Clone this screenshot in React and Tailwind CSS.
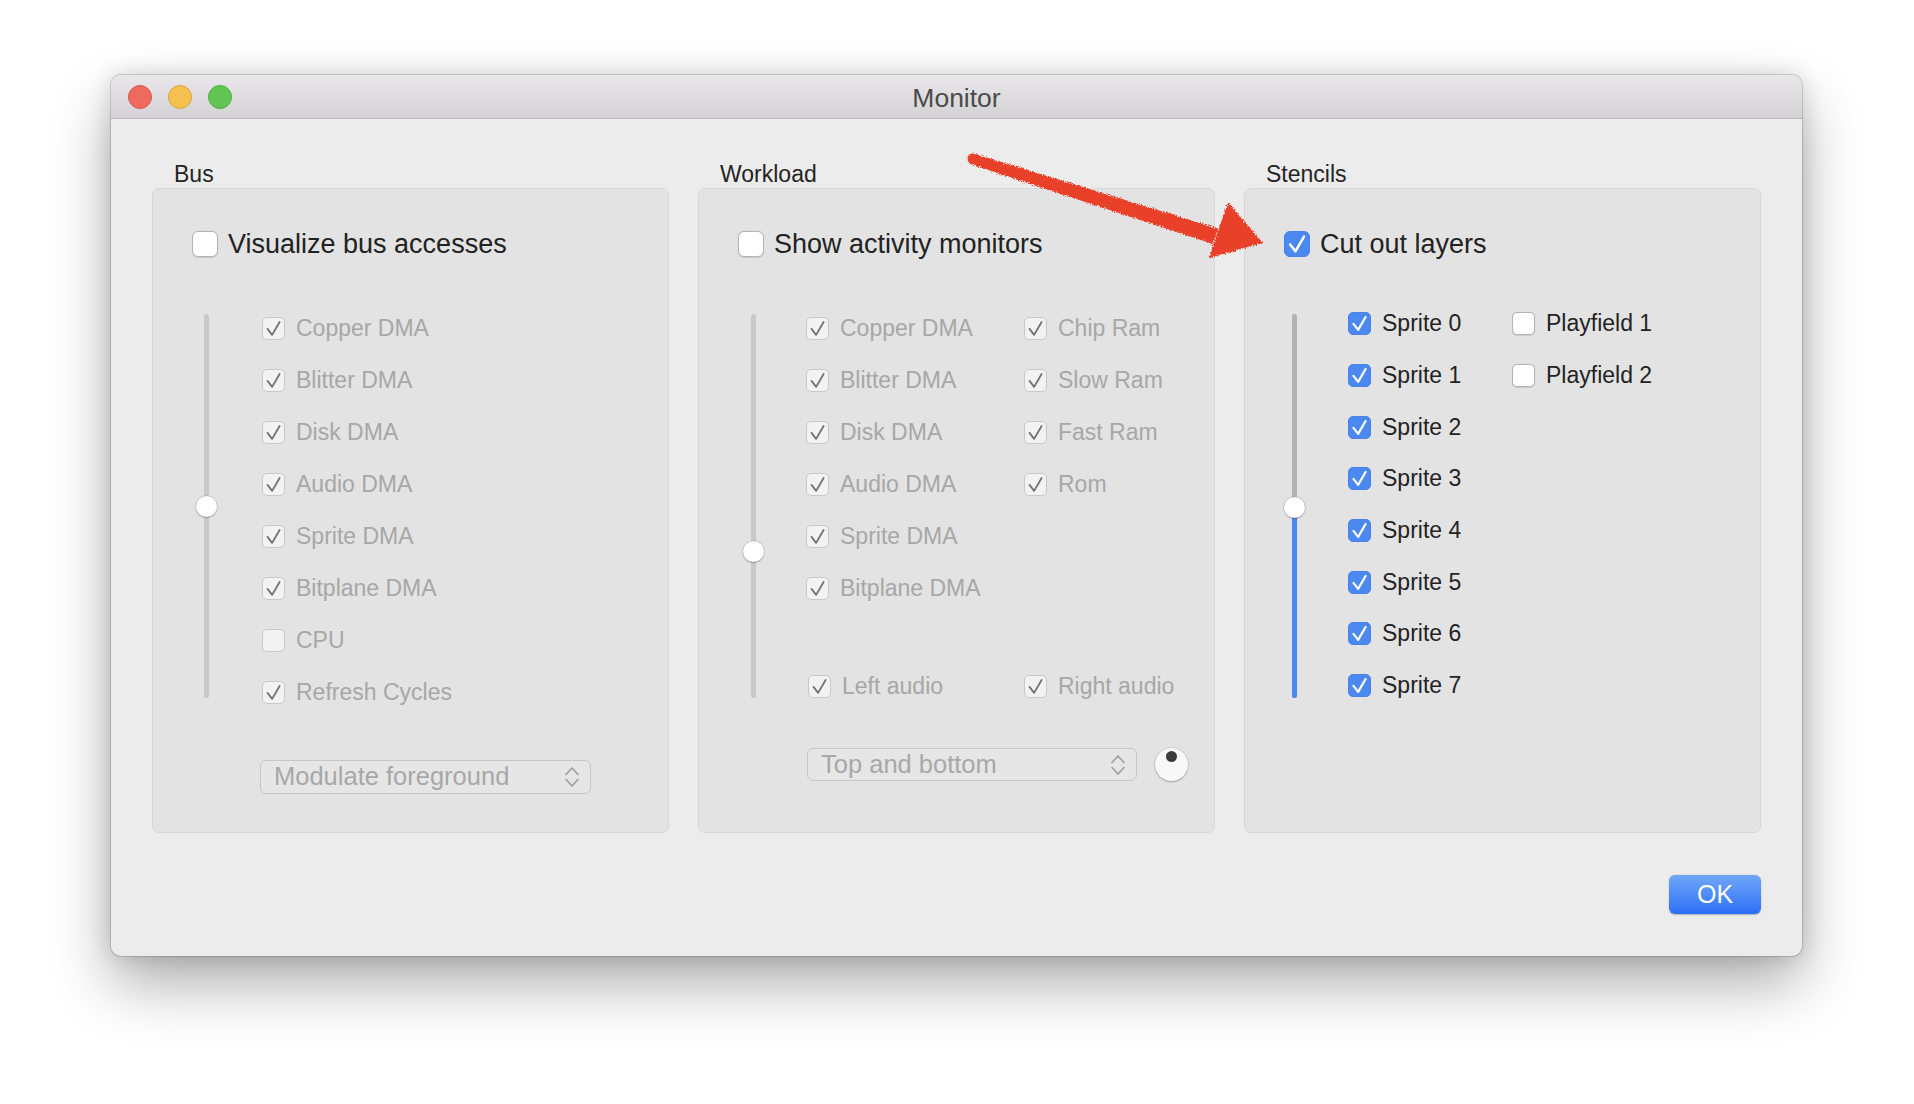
import React from "react";

// Small check glyph drawn inside a 23x23 box
function Tick({ stroke, width }) {
  return (
    <svg viewBox="0 0 23 23" className="w-full h-full">
      <path
        d="M4.9 11.9 L10 18.5 L18.2 4.4"
        fill="none"
        stroke={stroke}
        strokeWidth={width}
        strokeLinecap="round"
        strokeLinejoin="round"
      />
    </svg>
  );
}

const BOX_STYLE = {
  dim: "bg-[#f2f2f2] border border-[#c8c8c8]",
  off: "bg-white border border-[#b3b3b3] shadow-[0_0.5px_1px_rgba(0,0,0,0.12)]",
  on: "bg-[#4b89f0] border border-[#4682ea]",
};

function Box({ kind, checked, big }) {
  const size = big ? "w-[26px] h-[26px] rounded-[6px]" : "w-[23px] h-[23px] rounded-[5px]";
  return (
    <span className={`shrink-0 flex ${size} ${BOX_STYLE[kind]}`}>
      {checked && <Tick stroke={kind === "on" ? "#ffffff" : "#6f6f6f"} width={kind === "on" ? 2.4 : 1.9} />}
    </span>
  );
}

function Item({ label, kind = "dim", checked = true, extra = "" }) {
  const color = kind === "dim" ? "text-[#a7a7a7]" : "text-[#232323]";
  return (
    <div className={`flex items-center gap-[11px] ${extra}`}>
      <Box kind={kind} checked={checked} />
      <span className={`text-[23px] leading-none ${color}`}>{label}</span>
    </div>
  );
}

function MainToggle({ label, kind, checked }) {
  return (
    <div className="flex items-center gap-[10px] h-[26px]">
      <Box kind={kind} checked={checked} big />
      <span className="text-[27px] leading-none text-[#222222]">{label}</span>
    </div>
  );
}

function Slider({ pad, thumb, fill }) {
  return (
    <div className={`shrink-0 ${pad}`}>
      <div className={`relative w-[5px] h-[384px] rounded-full ${fill ? "bg-[#b2b2b2]" : "bg-[#c9c9c9]"}`}>
        {fill && <div className={`absolute left-0 right-0 bottom-0 rounded-b-full bg-[#4a87ee] ${fill}`} />}
        <div
          className={`absolute left-[-8px] w-[21px] h-[21px] rounded-full bg-white shadow-[0_0_0_0.5px_rgba(0,0,0,0.16),0_1px_2px_rgba(0,0,0,0.22)] ${thumb}`}
        />
      </div>
    </div>
  );
}

function Popup({ label, size }) {
  return (
    <div
      className={`flex items-center justify-between pl-[13px] pr-[10px] rounded-[6px] border border-[#c7c7c7] bg-[#e6e6e6] ${size}`}
    >
      <span className="text-[25.5px] leading-none text-[#a8a8a8]">{label}</span>
      <svg viewBox="0 0 16 24" className="w-[16px] h-[24px]">
        <path d="M2 9.5 L8 3 L14 9.5 M2 14.5 L8 21 L14 14.5" fill="none" stroke="#a0a0a0" strokeWidth="1.7" strokeLinecap="round" strokeLinejoin="round" />
      </svg>
    </div>
  );
}

function Section({ title, children }) {
  return (
    <div className="w-[517px] flex flex-col">
      <div className="h-[28px] leading-[30px] pl-[22px] mb-[1px] text-[23px] text-[#242424]">{title}</div>
      <div className="h-[645px] rounded-[7px] bg-[#e3e3e3] border border-[#d7d7d7] pt-[42px] pl-[39px] flex flex-col">
        {children}
      </div>
    </div>
  );
}

const busRows = [
  ["Copper DMA", true],
  ["Blitter DMA", true],
  ["Disk DMA", true],
  ["Audio DMA", true],
  ["Sprite DMA", true],
  ["Bitplane DMA", true],
  ["CPU", false],
  ["Refresh Cycles", true],
];

const workLeft = ["Copper DMA", "Blitter DMA", "Disk DMA", "Audio DMA", "Sprite DMA", "Bitplane DMA"];
const workRight = ["Chip Ram", "Slow Ram", "Fast Ram", "Rom"];
const sprites = ["Sprite 0", "Sprite 1", "Sprite 2", "Sprite 3", "Sprite 4", "Sprite 5", "Sprite 6", "Sprite 7"];

function TrafficLights() {
  return (
    <div className="flex items-center gap-[16px] pl-[17px] pt-[1px]">
      <span className="w-[24px] h-[24px] rounded-full bg-[#ee6a5f] border border-[#d5574c]" />
      <span className="w-[24px] h-[24px] rounded-full bg-[#f5c04f] border border-[#d9a441]" />
      <span className="w-[24px] h-[24px] rounded-full bg-[#61c554] border border-[#4fa941]" />
    </div>
  );
}

function RedArrow() {
  return (
    <svg viewBox="0 0 1914 1104" className="absolute inset-0 w-[1914px] h-[1104px] pointer-events-none">
      <defs>
        <filter id="crayon" x="-10%" y="-10%" width="120%" height="120%">
          <feTurbulence type="fractalNoise" baseFrequency="0.9" numOctaves="2" seed="3" result="n" />
          <feDisplacementMap in="SourceGraphic" in2="n" scale="5" xChannelSelector="R" yChannelSelector="G" />
        </filter>
      </defs>
      <g fill="#e9402a" filter="url(#crayon)">
        <circle cx="973" cy="159" r="5.5" />
        <polygon points="974.5,153.8 1218,228.5 1213,244 971.5,164.5" />
        <polygon points="1228,202 1209,258 1263,243" />
        <polygon points="1226,209 1214,250 1250,240" />
      </g>
    </svg>
  );
}

export default function App() {
  return (
    <div className="relative w-[1914px] h-[1104px] overflow-hidden bg-white pt-[75px] pl-[111px] font-['Liberation_Sans',Arial,sans-serif]">
      <div className="w-[1691px] h-[881px] rounded-[10px] overflow-hidden bg-[#ececec] flex flex-col shadow-[0_28px_60px_rgba(0,0,0,0.32),0_0_22px_rgba(0,0,0,0.14),0_0_0_1px_rgba(0,0,0,0.14)]">
        {/* title bar */}
        <div className="h-[44px] shrink-0 grid grid-cols-[1fr_auto_1fr] items-center bg-gradient-to-b from-[#e9e7e9] to-[#d4d2d4] border-b border-[#b8b8b8]">
          <TrafficLights />
          <span className="text-[26.5px] leading-none text-[#4b4b4b] pt-[4px]">Monitor</span>
          <span />
        </div>

        {/* content */}
        <div className="flex-1 flex flex-col px-[41px] pt-[40px]">
          <div className="flex gap-[29px]">
            {/* Bus */}
            <Section title="Bus">
              <MainToggle label="Visualize bus accesses" kind="off" checked={false} />
              <div className="flex mt-[45px]">
                <Slider pad="pl-[12px] pt-[12px]" thumb="top-[182px]" />
                <div className="ml-[53px] flex flex-col">
                  {busRows.map(([label, on]) => (
                    <div key={label} className="h-[52px] flex items-center">
                      <Item label={label} checked={on} />
                    </div>
                  ))}
                </div>
              </div>
              <div className="mt-[42px] ml-[68px]">
                <Popup label="Modulate foreground" size="w-[331px] h-[34px]" />
              </div>
            </Section>

            {/* Workload */}
            <Section title="Workload">
              <MainToggle label="Show activity monitors" kind="off" checked={false} />
              <div className="flex mt-[45px]">
                <Slider pad="pl-[13px] pt-[12px]" thumb="top-[227px]" />
                <div className="ml-[50px] flex flex-col">
                  <div className="flex">
                    <div className="w-[218px] flex flex-col">
                      {workLeft.map((label) => (
                        <div key={label} className="h-[52px] flex items-center">
                          <Item label={label} />
                        </div>
                      ))}
                    </div>
                    <div className="flex flex-col">
                      {workRight.map((label) => (
                        <div key={label} className="h-[52px] flex items-center">
                          <Item label={label} />
                        </div>
                      ))}
                    </div>
                  </div>
                  <div className="flex h-[52px] mt-[46px] items-center">
                    <div className="w-[218px]">
                      <Item label="Left audio" extra="pl-[2px]" />
                    </div>
                    <Item label="Right audio" />
                  </div>
                </div>
              </div>
              <div className="mt-[36px] ml-[69px] flex items-center gap-[18px]">
                <Popup label="Top and bottom" size="w-[330px] h-[33px]" />
                <div className="w-[33px] h-[33px] rounded-full bg-[#f8f8f8] shadow-[0_0_0_0.5px_rgba(0,0,0,0.14),0_1px_2px_rgba(0,0,0,0.25)] flex justify-center pt-[3px]">
                  <span className="w-[11px] h-[11px] rounded-full bg-[#3b3b3b]" />
                </div>
              </div>
            </Section>

            {/* Stencils */}
            <Section title="Stencils">
              <MainToggle label="Cut out layers" kind="on" checked />
              <div className="flex mt-[41px]">
                <Slider pad="pl-[8px] pt-[16px]" thumb="top-[183px]" fill="h-[190px]" />
                <div className="ml-[51px] flex">
                  <div className="w-[164px] flex flex-col">
                    {sprites.map((label) => (
                      <div key={label} className="h-[51.7px] flex items-center">
                        <Item label={label} kind="on" />
                      </div>
                    ))}
                  </div>
                  <div className="flex flex-col">
                    {["Playfield 1", "Playfield 2"].map((label) => (
                      <div key={label} className="h-[51.7px] flex items-center">
                        <Item label={label} kind="off" checked={false} />
                      </div>
                    ))}
                  </div>
                </div>
              </div>
            </Section>
          </div>

          <div className="flex justify-end mt-[42px]">
            <button className="w-[92px] h-[39px] rounded-[6px] bg-gradient-to-b from-[#70a6f8] to-[#2c6ef5] shadow-[0_0.5px_1.5px_rgba(0,0,0,0.25)] text-white text-[25px] leading-none">
              OK
            </button>
          </div>
        </div>
      </div>
      <RedArrow />
    </div>
  );
}
